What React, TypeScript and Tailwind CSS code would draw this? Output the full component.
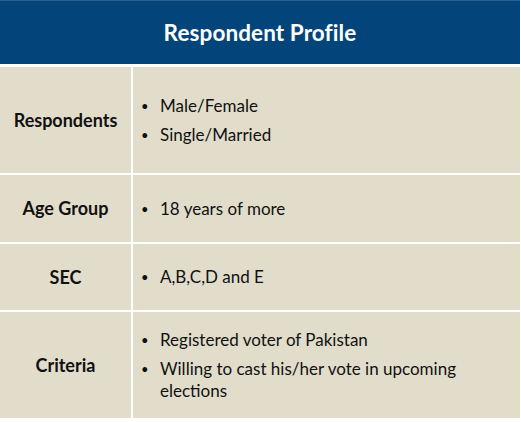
const rows: { label: string; items: string[]; h: string }[] = [
  { label: 'Respondents', items: ['Male/Female', 'Single/Married'], h: 'h-[106px]' },
  { label: 'Age Group', items: ['18 years of more'], h: 'h-[67px]' },
  { label: 'SEC', items: ['A,B,C,D and E'], h: 'h-[66px]' },
  {
    label: 'Criteria',
    items: ['Registered voter of Pakistan', 'Willing to cast his/her vote in upcoming elections'],
    h: 'h-[106px]',
  },
];

export default function App() {
  return (
    <div className="w-[521px] h-[422px] bg-white font-['Lato','Open_Sans',sans-serif]">
      <div className="w-[520px]">
        {/* header */}
        <div className="h-[64px] bg-[#03457a] border-t border-[#2a5f8c] flex items-center justify-center">
          <h1 className="text-white font-bold text-[22.5px] tracking-[0.1px]">Respondent Profile</h1>
        </div>

        {/* table body */}
        <div className="mt-[3px] grid grid-cols-[131px_1fr] gap-[2px] bg-white">
          {rows.map((r) => (
            <div key={r.label} className="contents">
              <div className={`${r.h} bg-[#e2ddcb] flex items-center justify-center`}>
                <span className="font-bold text-[18px] text-[#111]">{r.label}</span>
              </div>
              <div className={`${r.h} bg-[#e2ddcb] flex items-center pl-[8px] pr-4`}>
                <ul className="flex flex-col gap-[7px] text-[17px] leading-[22px] text-[#111]">
                  {r.items.map((it) => (
                    <li key={it} className="flex">
                      <span className="w-[19px] shrink-0 text-[13px]">•</span>
                      <span className="max-w-[320px]">{it}</span>
                    </li>
                  ))}
                </ul>
              </div>
            </div>
          ))}
        </div>
      </div>
    </div>
  );
}
